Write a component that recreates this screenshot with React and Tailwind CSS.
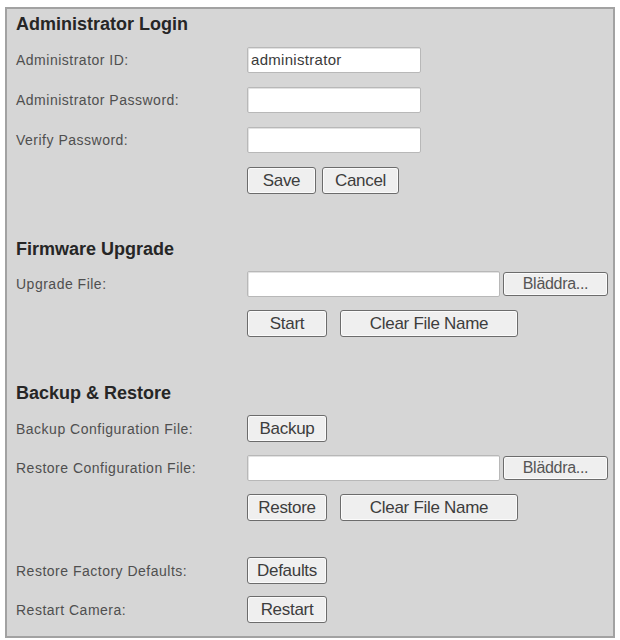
import React from "react";

const font = { fontFamily: '"Liberation Sans", Arial, sans-serif' };

function Heading({ children, className = "" }) {
  return (
    <h2 className={`text-[18px] leading-[22px] font-bold text-[#262626] ${className}`}>
      {children}
    </h2>
  );
}

function Label({ children }) {
  return (
    <span className="text-[14px] tracking-[0.5px] text-[#4f4f4f]">{children}</span>
  );
}

function TextBox({ width, value = "" }) {
  return (
    <div
      className={`${width} h-[26px] bg-white border border-[#b8b8b8] rounded-[2px] shadow-[inset_1px_1px_0_#e2e2e2] flex items-center px-[3px] text-[15px] tracking-[0.3px] text-[#3a3a3a]`}
    >
      {value}
    </div>
  );
}

function Btn({ width, children, className = "" }) {
  return (
    <button
      type="button"
      className={`${width} h-[27px] bg-[#efefef] border-[1.5px] border-[#6c6c6c] rounded-[3px] shadow-[inset_0_0_0_1px_#fbfbfb] text-[17px] tracking-[-0.3px] text-[#3d3d3d] leading-none flex items-center justify-center ${className}`}
    >
      {children}
    </button>
  );
}

function Row({ label, children, className = "" }) {
  return (
    <div className={`grid grid-cols-[231px_1fr] items-center ${className}`}>
      <div>{label && <Label>{label}</Label>}</div>
      <div className="flex items-center">{children}</div>
    </div>
  );
}

export default function App() {
  return (
    <div className="bg-white w-[620px] h-[640px] pt-[7px] pl-[5px]" style={font}>
      <div className="w-[610px] h-[631px] bg-[#d6d6d6] border-2 border-[#a2a2a2] pl-[9px] pt-[4px] flex flex-col">
        <Heading>Administrator Login</Heading>

        <div className="flex flex-col gap-[14px] mt-[12px]">
          <Row label="Administrator ID:">
            <TextBox width="w-[174px]" value="administrator" />
          </Row>
          <Row label="Administrator Password:">
            <TextBox width="w-[174px]" />
          </Row>
          <Row label="Verify Password:">
            <TextBox width="w-[174px]" />
          </Row>
          <Row>
            <Btn width="w-[69px]">Save</Btn>
            <Btn width="w-[77px]" className="ml-[6px]">Cancel</Btn>
          </Row>
        </div>

        <Heading className="mt-[44px]">Firmware Upgrade</Heading>

        <div className="flex flex-col gap-[13px] mt-[11px]">
          <Row label="Upgrade File:">
            <TextBox width="w-[253px]" />
            <Btn width="w-[105px]" className="ml-[3px] !h-[24px] !text-[16px] !text-[#555]">Bläddra...</Btn>
          </Row>
          <Row>
            <Btn width="w-[80px]">Start</Btn>
            <Btn width="w-[178px]" className="ml-[13px]">Clear File Name</Btn>
          </Row>
        </div>

        <Heading className="mt-[45px]">Backup &amp; Restore</Heading>

        <div className="flex flex-col gap-[13px] mt-[11px]">
          <Row label="Backup Configuration File:">
            <Btn width="w-[80px]">Backup</Btn>
          </Row>
          <Row label="Restore Configuration File:">
            <TextBox width="w-[253px]" />
            <Btn width="w-[105px]" className="ml-[3px] !h-[24px] !text-[16px] !text-[#555]">Bläddra...</Btn>
          </Row>
          <Row>
            <Btn width="w-[80px]">Restore</Btn>
            <Btn width="w-[178px]" className="ml-[13px]">Clear File Name</Btn>
          </Row>
        </div>

        <div className="flex flex-col gap-[12px] mt-[36px]">
          <Row label="Restore Factory Defaults:">
            <Btn width="w-[80px]">Defaults</Btn>
          </Row>
          <Row label="Restart Camera:">
            <Btn width="w-[80px]">Restart</Btn>
          </Row>
        </div>
      </div>
    </div>
  );
}
